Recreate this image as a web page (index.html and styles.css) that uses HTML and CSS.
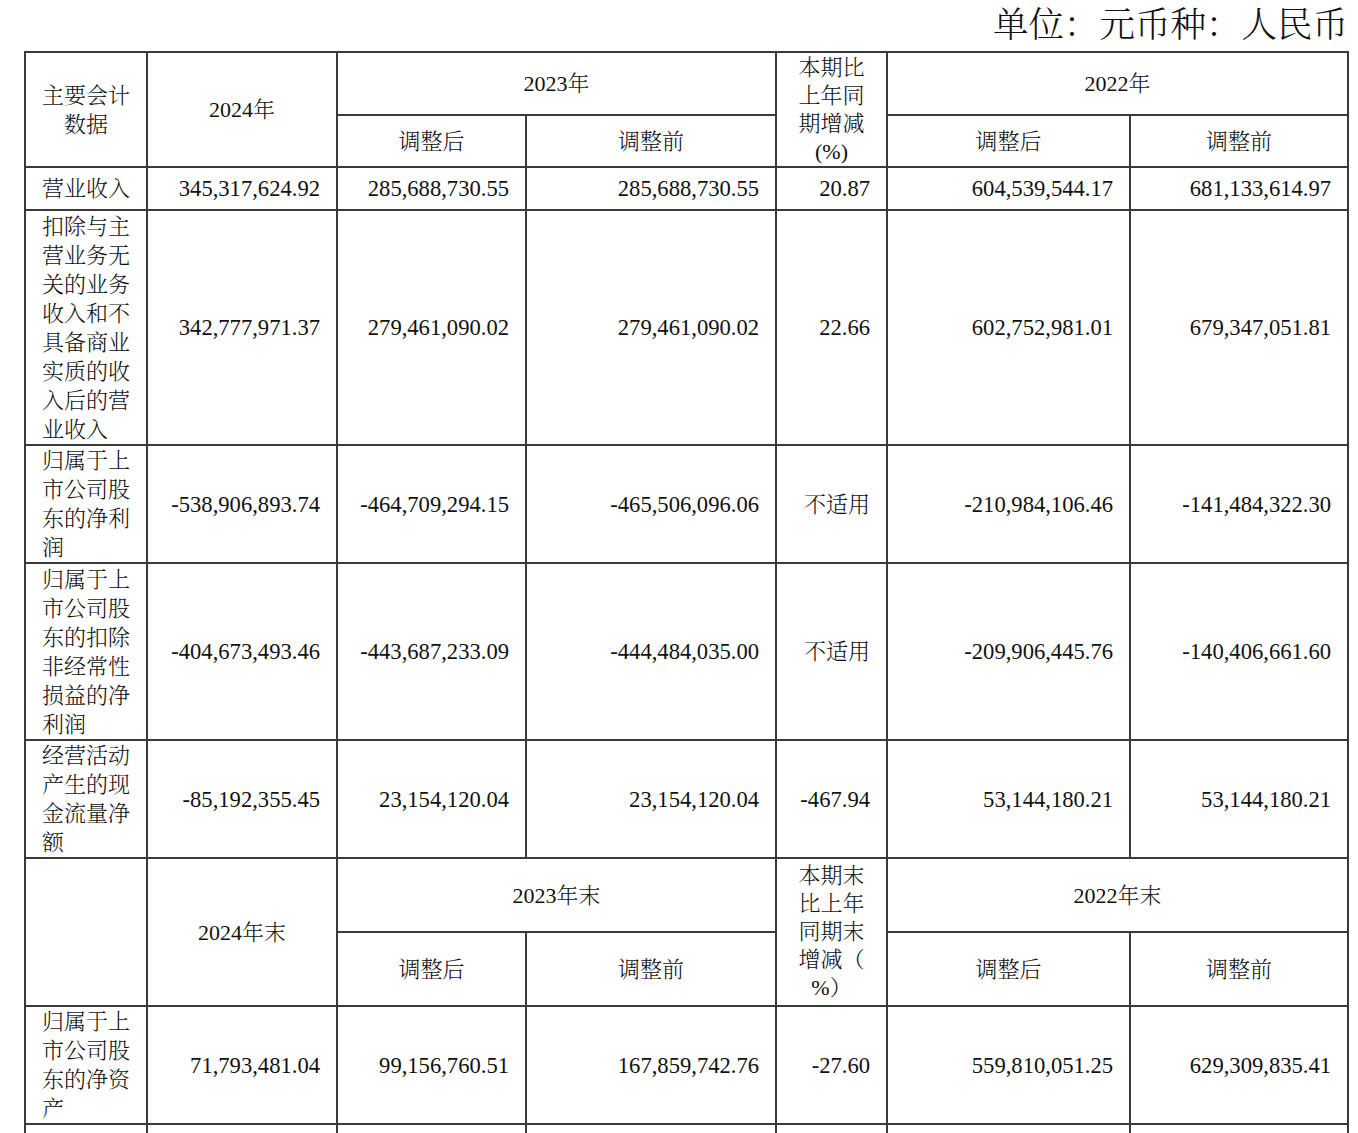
FILE: index.html
```html
<!DOCTYPE html>
<html lang="zh-CN">
<head>
<meta charset="utf-8">
<title>主要会计数据</title>
<link rel="stylesheet" href="styles.css">
</head>
<body>
<div class="page">
  <div class="unit">单位：元币种：人民币</div>
  <table class="fin">
    <colgroup>
      <col class="c-name">
      <col class="c-cur">
      <col class="c-a">
      <col class="c-b">
      <col class="c-pct">
      <col class="c-c">
      <col class="c-d">
    </colgroup>
    <tbody>
      <tr class="h1">
        <th rowspan="2">主要会计数据</th>
        <th rowspan="2">2024年</th>
        <th colspan="2">2023年</th>
        <th rowspan="2" class="pct">本期比<br>上年同<br>期增减<br>(%)</th>
        <th colspan="2">2022年</th>
      </tr>
      <tr class="h2">
        <th>调整后</th>
        <th>调整前</th>
        <th>调整后</th>
        <th>调整前</th>
      </tr>
      <tr class="r43">
        <td class="name">营业收入</td>
        <td>345,317,624.92</td>
        <td>285,688,730.55</td>
        <td>285,688,730.55</td>
        <td>20.87</td>
        <td>604,539,544.17</td>
        <td>681,133,614.97</td>
      </tr>
      <tr class="r236">
        <td class="name">扣除与主营业务无关的业务收入和不具备商业实质的收入后的营业收入</td>
        <td>342,777,971.37</td>
        <td>279,461,090.02</td>
        <td>279,461,090.02</td>
        <td>22.66</td>
        <td>602,752,981.01</td>
        <td>679,347,051.81</td>
      </tr>
      <tr class="r118">
        <td class="name">归属于上市公司股东的净利润</td>
        <td>-538,906,893.74</td>
        <td>-464,709,294.15</td>
        <td>-465,506,096.06</td>
        <td class="cjk">不适用</td>
        <td>-210,984,106.46</td>
        <td>-141,484,322.30</td>
      </tr>
      <tr class="r177">
        <td class="name">归属于上市公司股东的扣除非经常性损益的净利润</td>
        <td>-404,673,493.46</td>
        <td>-443,687,233.09</td>
        <td>-444,484,035.00</td>
        <td class="cjk">不适用</td>
        <td>-209,906,445.76</td>
        <td>-140,406,661.60</td>
      </tr>
      <tr class="r117">
        <td class="name">经营活动产生的现金流量净额</td>
        <td>-85,192,355.45</td>
        <td>23,154,120.04</td>
        <td>23,154,120.04</td>
        <td>-467.94</td>
        <td>53,144,180.21</td>
        <td>53,144,180.21</td>
      </tr>
      <tr class="h3">
        <th rowspan="2"></th>
        <th rowspan="2">2024年末</th>
        <th colspan="2">2023年末</th>
        <th rowspan="2" class="pct">本期末<br>比上年<br>同期末<br>增减（<br>%）</th>
        <th colspan="2">2022年末</th>
      </tr>
      <tr class="h4">
        <th>调整后</th>
        <th>调整前</th>
        <th>调整后</th>
        <th>调整前</th>
      </tr>
      <tr class="r118">
        <td class="name">归属于上市公司股东的净资产</td>
        <td>71,793,481.04</td>
        <td>99,156,760.51</td>
        <td>167,859,742.76</td>
        <td>-27.60</td>
        <td>559,810,051.25</td>
        <td>629,309,835.41</td>
      </tr>
      <tr class="r40">
        <td class="name"></td>
        <td></td>
        <td></td>
        <td></td>
        <td></td>
        <td></td>
        <td></td>
      </tr>
    </tbody>
  </table>
</div>
</body>
</html>
```

FILE: styles.css
```css
html, body {
  margin: 0;
  padding: 0;
  background: #ffffff;
}

body {
  font-family: "Liberation Serif", "Noto Serif CJK SC", "Noto Sans CJK SC", serif;
  color: #111111;
}

.page {
  padding: 0 10px 0 24px;
}

.unit {
  height: 51px;
  line-height: 51px;
  font-size: 35.5px;
  text-align: right;
  font-weight: 300;
  white-space: nowrap;
}

.fin {
  border-collapse: collapse;
  table-layout: fixed;
  width: 1323px;
  font-size: 22px;
  line-height: 29px;
  font-weight: 300;
}

.c-name { width: 122px; }
.c-cur { width: 190px; }
.c-a { width: 189px; }
.c-b { width: 250px; }
.c-pct { width: 111px; }
.c-c { width: 243px; }
.c-d { width: 218px; }

.fin th,
.fin td {
  border: 2px solid #3a3a3a;
  padding: 0 16px;
  vertical-align: middle;
  font-weight: 300;
}

.fin th {
  text-align: center;
}

.fin th.pct {
  line-height: 28px;
  padding: 0 8px;
}

.fin td {
  text-align: right;
  white-space: nowrap;
  font-size: 22.6px;
}

.fin td.cjk {
  font-size: 22px;
}

.fin td.name {
  text-align: left;
  white-space: normal;
  word-break: break-all;
  padding: 0 14px 0 16px;
  font-size: 22px;
}

.h1 { height: 63px; }
.h2 { height: 52px; }
.h3 { height: 74px; }
.h4 { height: 74px; }
.r43 { height: 43px; }
.r236 { height: 235px; }
.r118 { height: 118px; }
.r177 { height: 177px; }
.r117 { height: 117px; }
.r40 { height: 40px; }
```
